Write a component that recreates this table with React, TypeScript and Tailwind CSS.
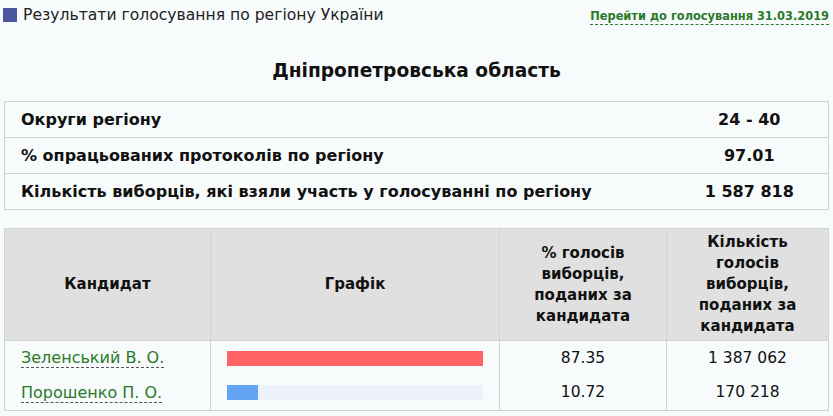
import React from 'react';

export default function App() {
  const info = [
    { label: 'Округи регіону', value: '24 - 40' },
    { label: '% опрацьованих протоколів по регіону', value: '97.01' },
    { label: 'Кількість виборців, які взяли участь у голосуванні по регіону', value: '1 587 818' },
  ];

  const candidates = [
    { name: 'Зеленський В. О.', pct: 87.35, votes: '1 387 062', color: 'bg-[#ff6363]', track: 'bg-[#ff6363]' },
    { name: 'Порошенко П. О.', pct: 10.72, votes: '170 218', color: 'bg-[#63a4f5]', track: 'bg-[#edf1fa]' },
  ];

  return (
    <div className="w-[833px] h-[416px] overflow-hidden bg-[#f8fbfc] text-[#111] font-['DejaVu_Sans',Verdana,sans-serif]">
      {/* top bar */}
      <div className="flex items-start justify-between pl-[3px] pr-[4px] pt-[5px]">
        <div className="flex items-center gap-[6px]">
          <span className="w-[14px] h-[14px] bg-[#4b559e] inline-block" />
          <span className="text-[15.6px] leading-[20px] text-[#222]">Результати голосування по регіону України</span>
        </div>
        <a className="mt-[4px] text-[11.4px] font-bold text-[#2a7a2a] border-b border-dashed border-[#2a7a2a] leading-[15px]">
          Перейти до голосування 31.03.2019
        </a>
      </div>

      <h2 className="text-center text-[18.6px] font-bold mt-[34px] mb-[18px] leading-[24px]">
        Дніпропетровська область
      </h2>

      <div className="pl-[4px] pr-[4px]">
        <table className="w-full border-collapse border border-[#cfd3d6]">
          <tbody>
            {info.map((r) =>
            <tr key={r.label} className="h-[36px] border-b border-[#cfd3d6]">
                <td className="pl-[16px] text-[16px] font-bold">{r.label}</td>
                <td className="w-[158px] text-center text-[16px] font-bold">{r.value}</td>
              </tr>
            )}
          </tbody>
        </table>

        <table className="w-full border-collapse mt-[18px]">
          <thead>
            <tr className="h-[112px] bg-[#e0e0e0]">
              <th className="border border-[#cfd3d6] w-[206px] text-[15px] font-bold leading-[21px]">Кандидат</th>
              <th className="border border-[#cfd3d6] w-[288px] text-[15px] font-bold leading-[21px]">Графік</th>
              <th className="border border-[#cfd3d6] w-[167px] text-[15px] font-bold leading-[21px] px-[20px]">
                % голосів виборців, поданих за кандидата
              </th>
              <th className="border border-[#cfd3d6] text-[15px] font-bold leading-[21px] px-[20px]">
                Кількість голосів виборців, поданих за кандидата
              </th>
            </tr>
          </thead>
          <tbody>
            {candidates.map((c) =>
            <tr key={c.name} className="h-[35px]">
                <td className="border-l border-r border-[#cfd3d6] pl-[16px] text-[16px]">
                  <a className="text-[#2a7a2a] border-b border-dashed border-[#555] leading-[18px]">{c.name}</a>
                </td>
                <td className="border-l border-r border-[#cfd3d6] px-[16px]">
                  <div className={`h-[15px] w-[256px] ${c.track}`}>
                    <div className={`h-full ${c.color}`} style={{ width: `${c.pct / 87.35 * 100}%` }} />
                  </div>
                </td>
                <td className="border-l border-r border-[#cfd3d6] text-center text-[15.5px]">{c.pct.toFixed(2)}</td>
                <td className="border-l border-r border-[#cfd3d6] text-center text-[15.5px]">{c.votes}</td>
              </tr>
            )}
            <tr className="h-0">
              <td colSpan={4} className="border-t border-[#cfd3d6] p-0" />
            </tr>
          </tbody>
        </table>
      </div>
    </div>);

}
